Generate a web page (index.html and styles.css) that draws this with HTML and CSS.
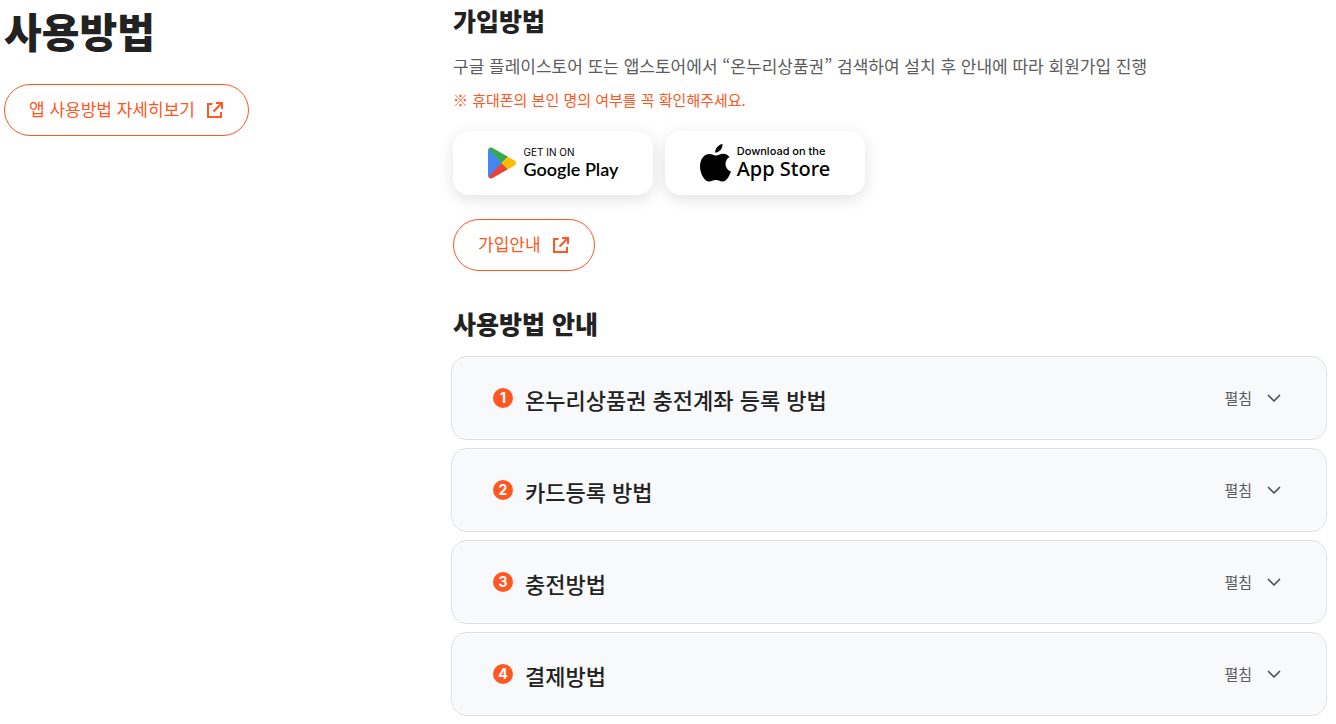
FILE: index.html
```
<!DOCTYPE html>
<html lang="ko">
<head>
  <meta charset="UTF-8">
  <meta name="viewport" content="width=device-width, initial-scale=1.0">
  <title>사용방법</title>
  <link rel="stylesheet" href="styles.css">
</head>
<body>

  <main class="guide">
    <div class="guide-side">
      <h1>사용방법</h1>
      <a href="#" class="btn-line">
        <span>앱 사용방법 자세히보기</span>
        <svg class="icon-link" viewBox="0 0 18 18" aria-hidden="true">
          <path d="M6.500 3H2v13h13v-5M10 2h6v6M16 2L7.500 10.500"/>
        </svg>
      </a>
    </div>

    <div class="guide-content">
      <section class="join">
        <h2>가입방법</h2>
        <p class="desc">구글 플레이스토어 또는 앱스토어에서 “온누리상품권” 검색하여 설치 후 안내에 따라 회원가입 진행</p>
        <p class="notice">※ 휴대폰의 본인 명의 여부를 꼭 확인해주세요.</p>

        <div class="stores">
          <a href="#" class="store google">
            <svg class="logo-google" viewBox="0 0 28 32" aria-hidden="true">
              <path fill="#4285f4" d="M0 3v26l1 1 13-14L1 2z"/>
              <path fill="#34a853" d="M0 3.500C0 1 2.500-.2 4.600 1L20 9.800 13.500 16 .3 2z"/>
              <path fill="#ea4335" d="M0 28.500C0 31 2.500 32.200 4.600 31L20 22.200 13.500 16 .3 30z"/>
              <path fill="#fbbc04" d="M20 9.800l6.500 3.700c2 1.200 2 3.800 0 5L20 22.200 13.500 16z"/>
            </svg>
            <span class="store-text">
              <small>GET IN ON</small>
              <strong>Google Play</strong>
            </span>
          </a>
          <a href="#" class="store apple">
            <svg class="logo-apple" viewBox="0 0 31 38" aria-hidden="true">
              <path d="M22.500 0c.4 4.400-3.400 8.700-7.300 8.600C14.800 4.600 18.600.5 22.500 0z"/>
              <path d="M29.500 13c-6 3.500-5 12.200 1.500 14.600-1.400 4-4.500 10-8.200 10-2.800 0-3.800-1.600-6.900-1.600s-4.200 1.600-6.800 1.600C4.300 37.600 0 29.500 0 22.300 0 14.500 4.700 9.900 9.500 9.900c2.700 0 4.700 1.700 6.600 1.700 1.900 0 4.100-1.900 7.200-1.900 2.200 0 4.700 1.200 6.200 3.300z"/>
            </svg>
            <span class="store-text">
              <small>Download on the</small>
              <strong>App Store</strong>
            </span>
          </a>
        </div>

        <a href="#" class="btn-line">
          <span>가입안내</span>
          <svg class="icon-link" viewBox="0 0 18 18" aria-hidden="true">
            <path d="M6.500 3H2v13h13v-5M10 2h6v6M16 2L7.500 10.500"/>
          </svg>
        </a>
      </section>

      <section class="howto">
        <h2>사용방법 안내</h2>
        <ul class="accordion">
          <li>
            <button type="button" aria-expanded="false">
              <span class="num">1</span>
              <span class="title">온누리상품권 충전계좌 등록 방법</span>
              <span class="state">펼침</span>
              <svg class="icon-arrow" viewBox="0 0 14 14" aria-hidden="true"><path d="M1 4l6 6 6-6"/></svg>
            </button>
          </li>
          <li>
            <button type="button" aria-expanded="false">
              <span class="num">2</span>
              <span class="title">카드등록 방법</span>
              <span class="state">펼침</span>
              <svg class="icon-arrow" viewBox="0 0 14 14" aria-hidden="true"><path d="M1 4l6 6 6-6"/></svg>
            </button>
          </li>
          <li>
            <button type="button" aria-expanded="false">
              <span class="num">3</span>
              <span class="title">충전방법</span>
              <span class="state">펼침</span>
              <svg class="icon-arrow" viewBox="0 0 14 14" aria-hidden="true"><path d="M1 4l6 6 6-6"/></svg>
            </button>
          </li>
          <li>
            <button type="button" aria-expanded="false">
              <span class="num">4</span>
              <span class="title">결제방법</span>
              <span class="state">펼침</span>
              <svg class="icon-arrow" viewBox="0 0 14 14" aria-hidden="true"><path d="M1 4l6 6 6-6"/></svg>
            </button>
          </li>
        </ul>
      </section>
    </div>
  </main>

</body>
</html>
```
FILE: styles.css
```
* {
  margin: 0;
  padding: 0;
  box-sizing: border-box;
}

body {
  background: #fff;
  font-family: 'Noto Sans CJK KR', sans-serif;
  font-size: 17px;
  color: #222;
}

a {
  color: inherit;
  text-decoration: none;
}

svg {
  flex: none;
}

.guide {
  display: grid;
  grid-template-columns: 1fr 2fr;
  column-gap: 9px;
  padding: 0 9px 8px 4px;
}

h1 {
  font-size: 41px;
  font-weight: 900;
  line-height: 60px;
  margin-bottom: 24px;
}

h2 {
  font-size: 25px;
  font-weight: 900;
  line-height: 40px;
}

/* outlined pill link */
.btn-line {
  display: inline-flex;
  align-items: center;
  gap: 11px;
  height: 52px;
  padding: 0 24px;
  border: 1px solid #ff5722;
  border-radius: 26px;
  color: #ff5722;
}

.btn-line span {
  padding-bottom: 3px;
}

.icon-link {
  width: 18px;
  height: 18px;
  fill: none;
  stroke: #ff5722;
  stroke-width: 2;
}

.join {
  padding-left: 2px;
}

.desc {
  line-height: 28px;
  margin-top: 12px;
  color: #5c5c5c;
}

.notice {
  font-size: 15px;
  line-height: 24px;
  margin-top: 8px;
  color: #ff5722;
}

.stores {
  display: flex;
  gap: 12px;
  margin: 19px 0 24px;
}

.store {
  display: flex;
  align-items: center;
  justify-content: center;
  width: 200px;
  height: 64px;
  border-radius: 16px;
  background: #fff;
  box-shadow: 0 4px 16px rgba(0, 0, 0, 0.12);
  color: #000;
}

.google {
  gap: 8px;
}

.apple {
  gap: 6px;
}

.logo-google {
  width: 28px;
  height: 32px;
}

.logo-apple {
  width: 31px;
  height: 38px;
}

.store-text {
  display: flex;
  flex-direction: column;
  white-space: nowrap;
}

.store-text small {
  font-family: Inter, sans-serif;
  font-size: 10px;
  line-height: 12px;
}

.store-text strong {
  line-height: 22px;
}

.google strong {
  font-family: Lato, sans-serif;
  font-size: 18px;
  font-weight: 600;
}

.apple small {
  font-size: 11px;
  font-weight: 500;
}

.apple strong {
  font-family: 'Noto Sans', sans-serif;
  font-size: 20px;
  font-weight: 500;
  line-height: 24px;
}

.howto {
  margin-top: 32px;
}

.howto h2 {
  padding-left: 2px;
  margin-bottom: 13px;
}

.accordion {
  display: flex;
  flex-direction: column;
  gap: 8px;
  list-style: none;
}

.accordion li {
  padding: 1px;
  border: 1px solid #ddd;
  border-radius: 16px;
}

.accordion button {
  display: flex;
  align-items: center;
  width: 100%;
  height: 80px;
  padding: 0 44px 0 40px;
  border: 0;
  border-radius: 14px;
  background: #f8f9fb;
  font-family: inherit;
  color: #222;
  text-align: left;
  cursor: pointer;
}

.num {
  width: 20px;
  height: 20px;
  border-radius: 50%;
  background: #ff5722;
  font-family: Inter, sans-serif;
  font-size: 14px;
  font-weight: 700;
  line-height: 20px;
  text-align: center;
  color: #fff;
}

.title {
  flex: 1;
  padding: 2px 0 0 12px;
  font-size: 22px;
  font-weight: 500;
}

.state {
  padding-bottom: 2px;
  margin-right: 15px;
  font-size: 15px;
  color: #5c5c5c;
}

.icon-arrow {
  width: 14px;
  height: 14px;
  fill: none;
  stroke: #444;
  stroke-width: 1.5;
}
```
